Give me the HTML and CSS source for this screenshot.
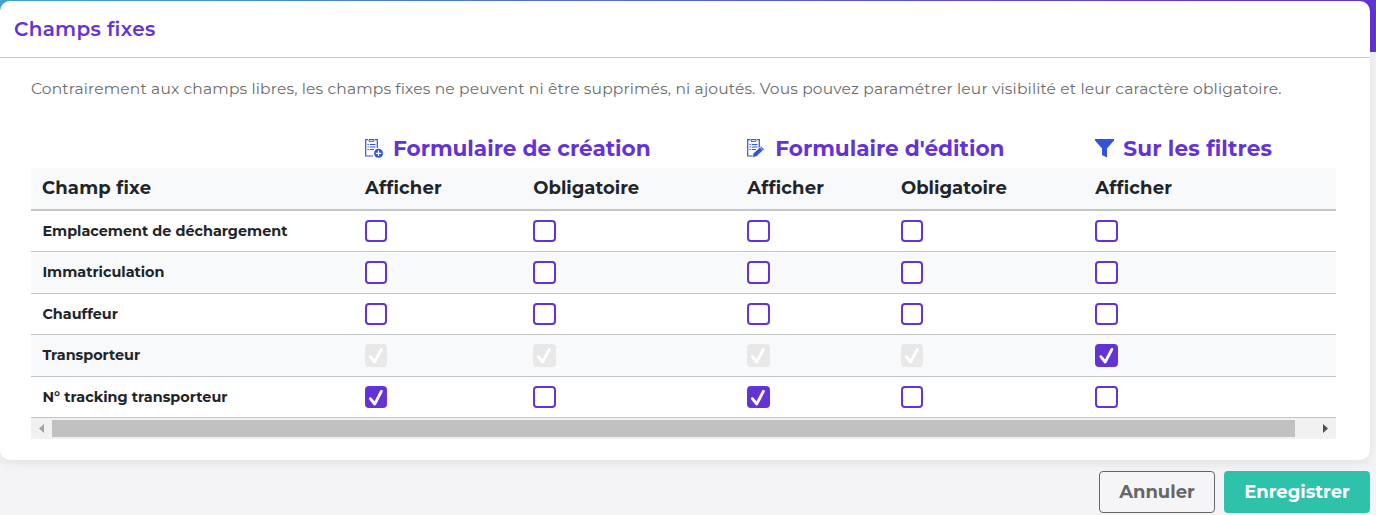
FILE: index.html
```html
<!DOCTYPE html>
<html lang="fr">
<head>
<meta charset="utf-8">
<title>Champs fixes</title>
<link rel="stylesheet" href="styles.css">
</head>
<body>
<svg width="0" height="0" class="defs">
  <symbol id="sheet" viewBox="0 0 18 19">
    <path d="M3 .7H.7v16.300H8M10 .7h2.300V9" fill="none" stroke="currentColor" stroke-width="1.200"/>
    <path d="M4 .5h5v1.800H4z" fill="none" stroke="currentColor"/>
    <path d="M2.500 5.500h1.300m1 0H10.500M2.500 8h1.300m1 0h5.700M2.500 10.500h1.300m1 0H9" stroke="currentColor" stroke-width="1.200"/>
  </symbol>
</svg>
<main class="page">
  <section class="card">
    <header class="card-header"><h1 class="title">Champs fixes</h1></header>
    <div class="card-body">
      <p class="intro">Contrairement aux champs libres, les champs fixes ne peuvent ni être supprimés, ni ajoutés. Vous pouvez paramétrer leur visibilité et leur caractère obligatoire.</p>
      <div class="table">
        <div class="row groups">
          <div class="cell g1"><svg class="icon" viewBox="0 0 18 19"><use href="#sheet"/><circle cx="13.500" cy="14.300" r="4.500" fill="currentColor"/><path d="M13.500 11.500v5.600M10.700 14.300h5.600" stroke="#fff" stroke-width="1.300"/></svg><span>Formulaire de création</span></div>
          <div class="cell g2"><svg class="icon" viewBox="0 0 18 19"><use href="#sheet"/><path d="M5.300 18.500l1-4.200 7.800-7 3.200 3-7.800 7.200z" fill="currentColor" stroke="#fff" stroke-width=".6"/><path d="M12.800 8.300l3.100 3" stroke="#fff" stroke-width=".7"/></svg><span>Formulaire d'édition</span></div>
          <div class="cell g3"><svg class="icon filter" viewBox="0 0 19 19"><path d="M0 0h19v1.500L12 9.500v9L7 16V9.500L0 1.500z" fill="currentColor"/></svg><span class="filters">Sur les filtres</span></div>
        </div>
        <div class="row head">
          <div class="cell field">Champ fixe</div><div class="cell show">Afficher</div><div class="cell">Obligatoire</div><div class="cell show">Afficher</div><div class="cell">Obligatoire</div><div class="cell show">Afficher</div>
        </div>
        <div class="row item"><div class="cell">Emplacement de déchargement</div><div class="cell"><i class="box"></i></div><div class="cell"><i class="box"></i></div><div class="cell"><i class="box"></i></div><div class="cell"><i class="box"></i></div><div class="cell"><i class="box"></i></div></div>
        <div class="row item alt"><div class="cell"><span class="raised">Immatriculation</span></div><div class="cell"><i class="box"></i></div><div class="cell"><i class="box"></i></div><div class="cell"><i class="box"></i></div><div class="cell"><i class="box"></i></div><div class="cell"><i class="box"></i></div></div>
        <div class="row item"><div class="cell">Chauffeur</div><div class="cell"><i class="box"></i></div><div class="cell"><i class="box"></i></div><div class="cell"><i class="box"></i></div><div class="cell"><i class="box"></i></div><div class="cell"><i class="box"></i></div></div>
        <div class="row item alt"><div class="cell">Transporteur</div>
          <div class="cell"><i class="box disabled"><svg viewBox="0 0 23 23"><path d="M5.500 13l4.500 5.500L16.800 5.500"/></svg></i></div>
          <div class="cell"><i class="box disabled"><svg viewBox="0 0 23 23"><path d="M5.500 13l4.500 5.500L16.800 5.500"/></svg></i></div>
          <div class="cell"><i class="box disabled"><svg viewBox="0 0 23 23"><path d="M5.500 13l4.500 5.500L16.800 5.500"/></svg></i></div>
          <div class="cell"><i class="box disabled"><svg viewBox="0 0 23 23"><path d="M5.500 13l4.500 5.500L16.800 5.500"/></svg></i></div>
          <div class="cell"><i class="box checked"><svg viewBox="0 0 23 23"><path d="M6 13l4.500 5.500L17.300 5.500"/></svg></i></div></div>
        <div class="row item"><div class="cell tracking">N° tracking transporteur</div>
          <div class="cell"><i class="box checked"><svg viewBox="0 0 23 23"><path d="M5.500 13l4.500 5.500L16.800 5.500"/></svg></i></div>
          <div class="cell"><i class="box"></i></div>
          <div class="cell"><i class="box checked"><svg viewBox="0 0 23 23"><path d="M5.500 13l4.500 5.500L16.800 5.500"/></svg></i></div>
          <div class="cell"><i class="box"></i></div><div class="cell"><i class="box"></i></div></div>
        <div class="scrollbar">
          <svg class="arrow" viewBox="0 0 21 21"><path d="M13 6v9L8 10.500z" fill="#a3a3a3"/></svg>
          <div class="thumb"></div>
          <svg class="arrow" viewBox="0 0 21 21"><path d="M8 6v9l5-4.500z" fill="#505050"/></svg>
        </div>
      </div>
    </div>
  </section>
  <footer class="actions">
    <button class="btn cancel">Annuler</button>
    <button class="btn save">Enregistrer</button>
  </footer>
</main>
</body>
</html>
```
FILE: styles.css
```css
* { box-sizing: border-box; }
body { margin: 0; font-family: Montserrat, Inter, sans-serif; color: #212529; font-variant-ligatures: none; }
.defs { display: block; }
.page {
  height: 515px; padding: 1px 6px 0 0; overflow: hidden;
  background: linear-gradient(90deg, #42a4d6, #4b83d0 25%, #6433d6 90%) 0 0 / 100% 52px no-repeat, #f4f4f6;
}
.card { height: 459px; background: #fff; border-radius: 10px; box-shadow: 0 2px 12px rgba(0,0,0,.09); clip-path: inset(0 -6px -20px 0); }
.card-header { height: 57px; padding: 0 14px; display: flex; align-items: center; border-bottom: 1px solid #c7c8ca; }
.title { margin: 0; font-size: 20px; font-weight: 600; letter-spacing: .3px; color: #6433d6; white-space: nowrap; }
.card-body { padding: 20px 34px 0 31px; }
.intro { margin: 0; height: 22px; line-height: 22px; font-size: 15.500px; font-weight: 400; letter-spacing: .148px; color: #6c6c6c; white-space: nowrap; }
.table { margin-top: 30px; }
.row { display: grid; grid-template-columns: 323px 168.300px 214px 153.700px 194.300px 251.700px; }
.cell { padding-left: 11px; display: flex; align-items: center; white-space: nowrap; }
.groups { height: 38px; font-size: 21.600px; font-weight: 700; color: #6433d6; }
.groups span { padding-bottom: 2px; }
.g1 { grid-column: 2 / 4; } .g2 { grid-column: 4 / 6; } .g3 { grid-column: 6; }
.filters { letter-spacing: .14px; }
.icon { width: 18px; height: 19px; margin: 0 10px 2px 0; color: #3254d8; flex: none; }
.filter { width: 19px; margin-right: 9px; }
.head { height: 43px; width: 1305px; background: #f7f9fb; border-bottom: 2px solid #c4c5c7; font-size: 18px; font-weight: 700; }
.head .cell { padding-bottom: 2px; }
.field { letter-spacing: .2px; }
.show { letter-spacing: .17px; }
.item { height: 41.400px; width: 1305px; border-bottom: 1px solid #c4c5c7; font-size: 14.400px; font-weight: 700; }
.item .cell:first-child { padding-left: 11.400px; }
.item .tracking { letter-spacing: .04px; }
.raised { padding-bottom: 1px; }
.alt { background: #f7f9fb; }
.box { width: 22.400px; height: 22.400px; border: 2px solid #6433d6; border-radius: 4px; background: #fff; display: block; }
.box svg { display: block; width: 22.400px; height: 22.400px; margin: -2px; }
.box path { fill: none; stroke: #fff; stroke-width: 2.900; stroke-linecap: round; stroke-linejoin: round; }
.box.checked { background: #6433d6; }
.box.disabled { background: #e8e8e8; border-color: #e8e8e8; }
.scrollbar { display: flex; align-items: center; width: 1305px; height: 21px; background: #f1f1f1; }
.arrow { width: 21px; height: 21px; flex: none; }
.thumb { width: 1243px; height: 17px; background: #c1c1c1; margin-right: 20px; flex: none; }
.actions { display: flex; justify-content: flex-end; gap: 9px; margin-top: 11px; }
.btn { height: 42px; padding: 0; border: 0; border-radius: 4px; font: 700 18px Montserrat, Inter, sans-serif; }
.cancel { width: 116px; background: #f5f5f7; border: 1px solid #666; color: #666; }
.save { width: 146px; background: #2ec2ab; color: #fff; }
```
